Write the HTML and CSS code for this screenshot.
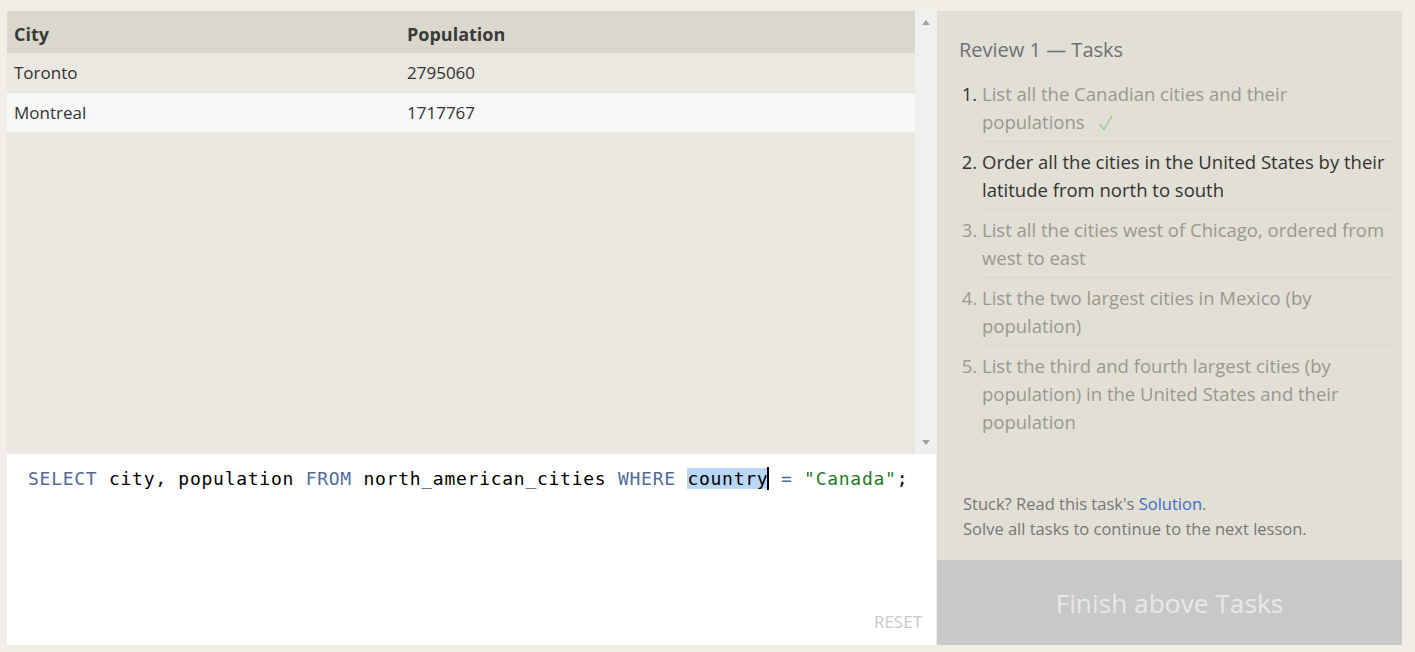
FILE: index.html
```html
<!DOCTYPE html>
<html>
<head>
<meta charset="utf-8">
<link rel="stylesheet" href="styles.css">
</head>
<body>
<div class="page">
  <div class="left">
    <div class="results">
      <div class="table-area">
        <table class="grid">
          <thead>
            <tr><th class="c1">City</th><th>Population</th></tr>
          </thead>
          <tbody>
            <tr class="odd"><td class="c1">Toronto</td><td>2795060</td></tr>
            <tr class="even"><td class="c1">Montreal</td><td>1717767</td></tr>
          </tbody>
        </table>
      </div>
      <div class="scrollbar">
        <span class="arrow up"></span>
        <span class="arrow down"></span>
      </div>
    </div>
    <div class="editor">
      <div class="code"><span class="kw">SELECT</span> city, population <span class="kw">FROM</span> north_american_cities <span class="kw">WHERE</span> <span class="sel">country</span><span class="cursor"></span> <span class="kw">=</span> <span class="str">"Canada"</span>;</div>
      <div class="reset">RESET</div>
    </div>
  </div>
  <div class="right">
    <div class="tasks">
      <h2 class="title">Review 1 — Tasks</h2>
      <ol class="task-list">
        <li class="done">List all the Canadian cities and their populations <svg class="check" width="14" height="16" viewBox="0 0 14 16"><path d="M1 9.5 L5 14.5 L13 1" fill="none" stroke="#8fcf8f" stroke-width="1.4" stroke-linecap="round" stroke-linejoin="round"/></svg></li>
        <li class="active">Order all the cities in the United States by their latitude from north to south</li>
        <li>List all the cities west of Chicago, ordered from west to east</li>
        <li>List the two largest cities in Mexico (by population)</li>
        <li>List the third and fourth largest cities (by population) in the United States and their population</li>
      </ol>
      <div class="help">
        <div>Stuck? Read this task's <a class="link">Solution</a>.</div>
        <div>Solve all tasks to continue to the next lesson.</div>
      </div>
    </div>
    <div class="finish">Finish above Tasks</div>
  </div>
</div>
</body>
</html>
```
FILE: styles.css
```css
html, body {
  margin: 0;
  padding: 0;
  background: #f0eee6;
  font-family: "Open Sans", "Noto Sans", sans-serif;
}
.page {
  display: flex;
  gap: 1px;
  padding: 11px 13px 7px 7px;
  height: 634px;
}
.left {
  width: 929px;
  display: flex;
  flex-direction: column;
}
.results {
  height: 443px;
  display: flex;
  background: #e9e7e0;
}
.table-area {
  flex: 1;
}
.grid {
  width: 100%;
  border-collapse: collapse;
  font-size: 17px;
  color: #333;
}
.grid th {
  text-align: left;
  font-weight: 700;
  font-size: 18px;
  height: 42px;
  padding: 3px 7px 0;
  box-sizing: border-box;
  background: #dad8cc;
  color: #3a3a3a;
}
.grid td {
  height: 39px;
  padding: 0 7px;
}
.grid .c1 { width: 379px; }
.grid tr.odd td { background: #eae8e0; }
.grid tr.even td { background: #f8f8f7; border-top: 1px solid #e4e3dd; }
.scrollbar {
  width: 21px;
  background: #f0f0f0;
  display: flex;
  flex-direction: column;
  justify-content: space-between;
  align-items: center;
  padding: 9px 0 9px;
}
.arrow {
  width: 0;
  height: 0;
  border-left: 4px solid transparent;
  border-right: 4px solid transparent;
}
.arrow.up { border-bottom: 5px solid #a3a3a3; }
.arrow.down { border-top: 5px solid #a3a3a3; }
.editor {
  flex: 1;
  background: #fff;
  display: flex;
  flex-direction: column;
  justify-content: space-between;
  padding: 13px 14px 12px 21px;
}
.code {
  font-family: "DejaVu Sans Mono", monospace;
  font-size: 18px;
  letter-spacing: 0.73px;
  line-height: 24px;
  color: #000;
  white-space: pre;
}
.kw { color: #4f6b9a; }
.str { color: #1d7a1d; }
.sel { background: #b9d6fb; }
.cursor {
  display: inline-block;
  width: 2px;
  height: 23px;
  background: #000;
  vertical-align: -5px;
  margin-left: -1px;
}
.reset {
  align-self: flex-end;
  font-size: 17px;
  color: #cacaca;
}
.right {
  width: 465px;
  display: flex;
  flex-direction: column;
  background: #e2dfd5;
}
.tasks {
  flex: 1;
  display: flex;
  flex-direction: column;
  padding: 25px 10px 19px 22px;
}
.title {
  margin: 0;
  font-size: 20px;
  font-weight: 400;
  line-height: 28px;
  color: #6b7178;
}
.task-list {
  margin: 16px 0 0;
  padding-left: 23px;
  font-size: 18.5px;
  line-height: 28px;
  color: #9a9890;
}
.task-list li {
  padding: 6px 0 5px;
  border-top: 1px solid #d8d5cb;
}
.task-list li:first-child { border-top: none; padding-top: 0; }
.task-list li::marker { color: #9a9890; }
.task-list li.done::marker { color: #333; }
.task-list li.active { color: #333; }
.task-list li.active::marker { color: #333; }
.check {
  vertical-align: -2px;
  margin-left: 10px;
}
.help {
  margin-top: auto;
  padding-left: 4px;
  font-size: 16.5px;
  line-height: 25px;
  color: #777;
}
.link { color: #3a6fc6; }
.finish {
  height: 85px;
  background: #c8c8c8;
  color: #e8e8e8;
  font-size: 26.3px;
  display: flex;
  align-items: center;
  justify-content: center;
}
```
